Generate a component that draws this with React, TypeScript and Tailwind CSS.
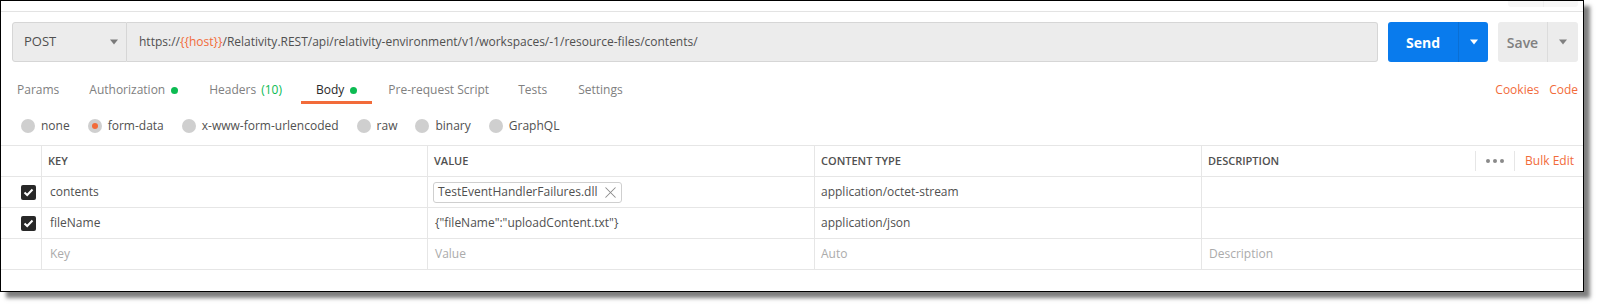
import { X } from 'lucide-react';

const Caret = ({ className }: { className: string }) => (
  <svg width="10" height="6" viewBox="0 0 10 6" className={className}>
    <polygon points="0,0 10,0 5,6" fill="currentColor" />
  </svg>
);

const Dot = () => <span className="inline-block w-[7px] h-[7px] rounded-full bg-[#0cbb52] ml-[6px]" />;

const Check = () => (
  <div className="w-[15px] h-[15px] rounded-[2px] bg-[#282828] flex items-center justify-center">
    <svg width="11" height="9" viewBox="0 0 11 9">
      <polyline points="1.5,4.5 4.2,7 9.5,1.5" fill="none" stroke="white" strokeWidth="2" />
    </svg>
  </div>
);

const radios = [
  { label: 'none' },
  { label: 'form-data', selected: true },
  { label: 'x-www-form-urlencoded' },
  { label: 'raw' },
  { label: 'binary' },
  { label: 'GraphQL' },
];

const rows = [
  { key: 'contents', value: 'TestEventHandlerFailures.dll', chip: true, type: 'application/octet-stream', desc: '' },
  { key: 'fileName', value: '{"fileName":"uploadContent.txt"}', type: 'application/json', desc: '' },
];

export default function App() {
  return (
    <div className="w-[1599px] h-[307px] bg-white font-['Open_Sans',sans-serif]">
      <div className="w-[1584px] h-[292px] border border-black bg-white shadow-[6px_6px_4px_rgba(0,0,0,0.5)] flex flex-col overflow-hidden">
        {/* leftover of the tab strip above */}
        <div className="h-[11px] border-b border-[#e3e3e3] flex justify-end pr-[5px]">
          <div className="w-[70px] h-[6px] bg-[#f7f7f7] rounded-b-[3px] flex justify-center">
            <div className="w-px h-full bg-[#eeeeee]" />
          </div>
        </div>

        {/* URL row */}
        <div className="mt-[10px] h-[40px] flex pl-[11px] pr-[5px]">
          <div className="w-[115px] h-full bg-[#ececec] border border-[#d6d6d6] rounded-l-[3px] flex items-center justify-between pl-[11px] pr-[8px]">
            <span className="text-[13px] font-medium text-[#505050]">POST</span>
            <Caret className="text-[#7a7a7a] w-[8px]" />
          </div>
          <div className="flex-1 h-full bg-[#ececec] border border-l-0 border-[#d6d6d6] rounded-r-[3px] flex items-center pl-[12px] text-[12px] text-[#505050]">
            https://<span className="text-[#f26b3a]">{'{{host}}'}</span>/Relativity.REST/api/relativity-environment/v1/workspaces/-1/resource-files/contents/
          </div>
          <div className="ml-[10px] w-[100px] h-full rounded-[3px] bg-[#097bed] flex text-white">
            <div className="w-[70px] flex items-center justify-center text-[14px] font-bold">Send</div>
            <div className="flex-1 border-l border-[#0a6fd4] flex items-center justify-center">
              <Caret className="text-white w-[8px]" />
            </div>
          </div>
          <div className="ml-[10px] w-[80px] h-full rounded-[3px] bg-[#ececec] flex text-[#808080]">
            <div className="w-[49px] flex items-center justify-center text-[14px] font-semibold">Save</div>
            <div className="flex-1 border-l border-[#dcdcdc] flex items-center justify-center">
              <Caret className="text-[#808080] w-[8px]" />
            </div>
          </div>
        </div>

        {/* Tabs */}
        <div className="mt-[10px] h-[32px] flex items-stretch text-[12px] text-[#808080] pl-[16px] pr-[5px]">
          <div className="flex items-center pt-[4px] mr-[30px]">Params</div>
          <div className="flex items-center pt-[4px] mr-[31px]">Authorization<Dot /></div>
          <div className="flex items-center pt-[4px] mr-[19px]">
            Headers<span className="text-[#0cbb52] ml-[5px]">(10)</span>
          </div>
          <div className="flex items-center pt-[7px] px-[15px] text-[#282828] border-b-[3px] border-[#f26b3a]">
            <span>Body</span><Dot />
          </div>
          <div className="flex items-center pt-[4px] ml-[16px] mr-[29px]">Pre-request Script</div>
          <div className="flex items-center pt-[4px] mr-[31px]">Tests</div>
          <div className="flex items-center pt-[4px]">Settings</div>
          <div className="flex-1" />
          <div className="flex items-center pt-[4px] text-[#f26b3a] mr-[10px]">Cookies</div>
          <div className="flex items-center pt-[4px] text-[#f26b3a]">Code</div>
        </div>

        {/* Body type radios */}
        <div className="h-[41px] pt-[2px] flex items-center text-[12px] text-[#505050] pl-[20px]">
          {radios.map((r) => (
            <div key={r.label} className="flex items-center mr-[18px]">
              <span className="w-[14px] h-[14px] rounded-full bg-[#cfcfcf] flex items-center justify-center mr-[6px]">
                {r.selected && <span className="w-[6px] h-[6px] rounded-full bg-[#f26b3a]" />}
              </span>
              {r.label}
            </div>
          ))}
        </div>

        {/* Table */}
        <div className="border-t border-[#e6e6e6] text-[12px] text-[#505050]">
          <div className="h-[31px] grid grid-cols-[41px_386px_387px_387px_1fr] border-b border-[#e6e6e6]">
            <div className="border-r border-[#e6e6e6]" />
            <div className="border-r border-[#e6e6e6] flex items-center pl-[6px] text-[11px] font-semibold text-[#505050]">KEY</div>
            <div className="border-r border-[#e6e6e6] flex items-center pl-[6px] text-[11px] font-semibold">VALUE</div>
            <div className="border-r border-[#e6e6e6] flex items-center pl-[6px] text-[11px] font-semibold">CONTENT TYPE</div>
            <div className="flex items-center pl-[6px] text-[11px] font-semibold">
              DESCRIPTION
              <div className="flex-1" />
              <div className="h-[20px] border-l border-r border-[#e6e6e6] px-[10px] flex items-center gap-[3px]">
                <span className="w-[4px] h-[4px] rounded-full bg-[#8a8a8a]" />
                <span className="w-[4px] h-[4px] rounded-full bg-[#8a8a8a]" />
                <span className="w-[4px] h-[4px] rounded-full bg-[#8a8a8a]" />
              </div>
              <span className="ml-[10px] mr-[9px] text-[12px] font-normal text-[#f26b3a]">Bulk Edit</span>
            </div>
          </div>
          {rows.map((r) => (
            <div key={r.key} className="h-[31px] grid grid-cols-[41px_386px_387px_387px_1fr] border-b border-[#e6e6e6]">
              <div className="border-r border-[#e6e6e6] flex items-center justify-end pr-[5px]">
                <Check />
              </div>
              <div className="border-r border-[#e6e6e6] flex items-center pl-[8px]">{r.key}</div>
              <div className="border-r border-[#e6e6e6] flex items-center pl-[5px]">
                {r.chip ? (
                  <span className="h-[21px] border border-[#cfcfcf] rounded-[3px] flex items-center pl-[4px] pr-[1px] text-[12px]">
                    {r.value}
                    <X className="w-[19px] h-[19px] ml-[4px] text-[#8a8a8a]" strokeWidth={1.3} />
                  </span>
                ) : (
                  <span className="pl-[2px]">{r.value}</span>
                )}
              </div>
              <div className="border-r border-[#e6e6e6] flex items-center pl-[6px]">{r.type}</div>
              <div className="flex items-center pl-[7px]">{r.desc}</div>
            </div>
          ))}
          <div className="h-[31px] grid grid-cols-[41px_386px_387px_387px_1fr] border-b border-[#e6e6e6] text-[#ababab]">
            <div className="border-r border-[#e6e6e6]" />
            <div className="border-r border-[#e6e6e6] flex items-center pl-[8px]">Key</div>
            <div className="border-r border-[#e6e6e6] flex items-center pl-[7px]">Value</div>
            <div className="border-r border-[#e6e6e6] flex items-center pl-[6px]">Auto</div>
            <div className="flex items-center pl-[7px]">Description</div>
          </div>
        </div>
      </div>
    </div>
  );
}
